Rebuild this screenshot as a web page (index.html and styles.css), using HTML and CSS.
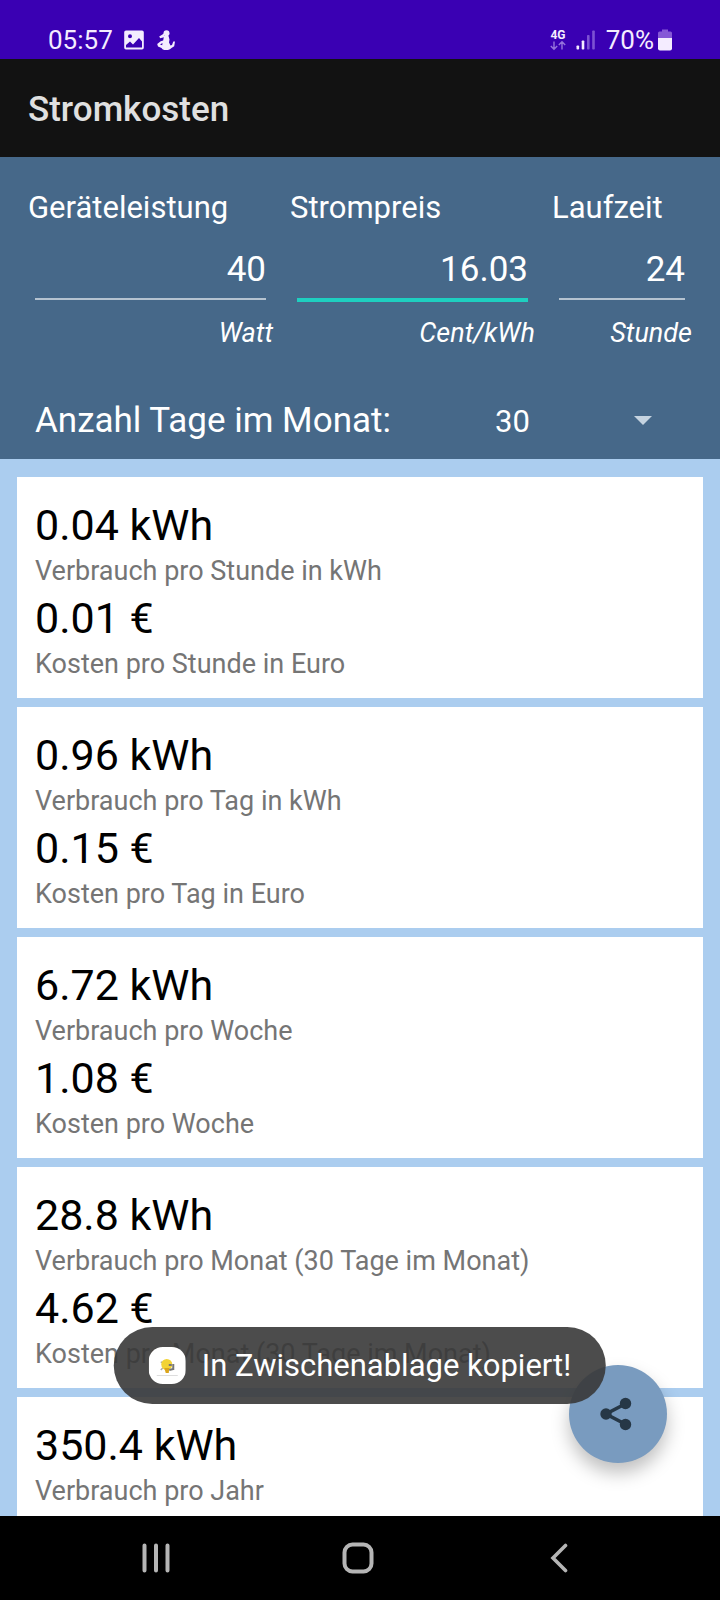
FILE: index.html
```html
<!DOCTYPE html>
<html lang="de">
<head>
<meta charset="utf-8">
<meta name="viewport" content="width=device-width, initial-scale=1">
<title>Stromkosten</title>
<link rel="stylesheet" href="styles.css">
</head>
<body>
<div class="app">
  <div class="status">
    <div class="status-left">
      <span class="clock">05:57</span>
      <svg class="icon-image" viewBox="0 0 20 20" width="20" height="20" aria-hidden="true"><path fill="#f4ecff" fill-rule="evenodd" d="M2 0.500h16a1.800 1.800 0 0 1 1.800 1.800v15.400a1.800 1.800 0 0 1-1.800 1.800h-16a1.800 1.800 0 0 1-1.800-1.800v-15.400a1.800 1.800 0 0 1 1.800-1.800zM6 4.200a2 2 0 1 0 0 4a2 2 0 1 0 0-4zM2 17.500h16v-6l-3-3.500l-6 6.500l-3-3l-4 3.500z"/></svg>
      <svg class="icon-app" viewBox="0 0 18 20" width="18" height="20" aria-hidden="true"><g fill="#f4ecff"><circle cx="9.500" cy="3.200" r="3"/><path d="M7 3.500L2.200 6.500l1 1.800L8 7z"/><path d="M7 6h4.500l1 3.500l-0.500 3l1.500 3l1.500-0.500l1.300-3.500h1.700l-0.800 4.700l-2.700 1.800q-2 2.200-5.500 2.200q-3.500 0-4.500-2.200l-3.500-1.500l-0.800-2.500l3.500-2.800l2.500-0.700z"/></g><path d="M3 14.500l2.500-1.500l-0.300 2.300z" fill="#3a00b3"/></svg>
    </div>
    <div class="status-right">
      <svg class="icon-net" viewBox="0 0 16 22" width="16" height="22" role="img" aria-label="4G"><text x="8" y="10" text-anchor="middle" class="net-text">4G</text><path d="M4 12.500v7.500M0.800 17l3.200 3.200L7.200 17M12 20.500v-7.500M8.800 16l3.200-3.200l3.200 3.200" fill="none" stroke="#9673dc" stroke-width="1.400"/></svg>
      <svg class="icon-signal" viewBox="0 0 20 20" width="20" height="20" aria-hidden="true"><g fill="#f4ecff"><rect x="0.500" y="15.500" width="2.600" height="4" rx="0.800"/><rect x="5.700" y="10.500" width="2.600" height="9" rx="0.800"/></g><g fill="#7d52d3"><rect x="11" y="5" width="2.600" height="14.500" rx="0.800"/><rect x="16.200" y="0.500" width="2.600" height="19" rx="0.800"/></g></svg>
      <span class="battery-level">70%</span>
      <svg class="icon-battery" viewBox="0 0 14 22" width="14" height="22" aria-hidden="true"><path d="M4 0.500h6v2h2.500a1.500 1.500 0 0 1 1.500 1.500v5.500h-14v-5.500a1.500 1.500 0 0 1 1.500-1.500h2.500z" fill="#8558d6"/><path d="M0 9h14v10.500a2 2 0 0 1-2 2h-10a2 2 0 0 1-2-2z" fill="#f4ecff"/></svg>
    </div>
  </div>

  <header class="title-bar"><h1 class="title">Stromkosten</h1></header>

  <form class="panel">
    <div class="fields">
      <div class="field">
        <label class="field-label" for="power">Geräteleistung</label>
        <input class="field-input" id="power" type="text" inputmode="decimal" value="40">
        <span class="field-unit">Watt</span>
      </div>
      <div class="field">
        <label class="field-label" for="price">Strompreis</label>
        <input class="field-input field-input-active" id="price" type="text" inputmode="decimal" value="16.03">
        <span class="field-unit">Cent/kWh</span>
      </div>
      <div class="field">
        <label class="field-label" for="runtime">Laufzeit</label>
        <input class="field-input" id="runtime" type="text" inputmode="decimal" value="24">
        <span class="field-unit">Stunde</span>
      </div>
    </div>
    <div class="days">
      <label class="days-label" for="days">Anzahl Tage im Monat:</label>
      <div class="days-box">
        <select class="days-select" id="days"><option>28</option><option>29</option><option selected>30</option><option>31</option></select>
        <svg class="days-arrow" viewBox="0 0 18 9" width="18" height="9" aria-hidden="true"><path d="M0 0h18l-9 9z" fill="#c5d3e0"/></svg>
      </div>
    </div>
  </form>

  <main class="content">
    <div class="results">
      <section class="card">
        <p class="value">0.04 kWh</p><p class="caption">Verbrauch pro Stunde in kWh</p>
        <p class="value">0.01 €</p><p class="caption">Kosten pro Stunde in Euro</p>
      </section>
      <section class="card">
        <p class="value">0.96 kWh</p><p class="caption">Verbrauch pro Tag in kWh</p>
        <p class="value">0.15 €</p><p class="caption">Kosten pro Tag in Euro</p>
      </section>
      <section class="card">
        <p class="value">6.72 kWh</p><p class="caption">Verbrauch pro Woche</p>
        <p class="value">1.08 €</p><p class="caption">Kosten pro Woche</p>
      </section>
      <section class="card">
        <p class="value">28.8 kWh</p><p class="caption">Verbrauch pro Monat (30 Tage im Monat)</p>
        <p class="value">4.62 €</p><p class="caption">Kosten pro Monat (30 Tage im Monat)</p>
      </section>
      <section class="card">
        <p class="value">350.4 kWh</p><p class="caption">Verbrauch pro Jahr</p>
      </section>
    </div>

    <button class="share" type="button" aria-label="Teilen">
      <svg viewBox="0 0 32 34" width="32" height="34" aria-hidden="true"><path d="M26 6.500L6 17l20 10.500" fill="none" stroke="#263746" stroke-width="3.600"/><g fill="#263746"><circle cx="25.500" cy="6.500" r="5.700"/><circle cx="6" cy="17" r="5.700"/><circle cx="25.500" cy="27.500" r="5.700"/></g></svg>
    </button>

    <div class="toast" role="status">
      <svg class="toast-icon" viewBox="0 0 37 37" width="37" height="37" aria-hidden="true"><rect width="37" height="37" rx="14" fill="#fff"/><path d="M8 28.500h21" stroke="#ddd" stroke-width="1"/><path d="M12 15l3 1M14 21l-2 2" stroke="#aaa" stroke-width="1.500"/><circle cx="18" cy="17.500" r="5.500" fill="#f2d335"/><path d="M15.500 21h5l-0.500 5h-3z" fill="#dba51b"/><path d="M20 18h3M24.500 17v6M20.500 23l4-1" stroke="#777" stroke-width="2"/></svg>
      <span class="toast-text">In Zwischenablage kopiert!</span>
    </div>
  </main>

  <nav class="nav">
    <button class="nav-button" type="button" aria-label="Letzte Apps"><svg viewBox="0 0 28 30" width="28" height="30"><path d="M2.500 2.500v25M14 2.500v25M25.500 2.500v25" stroke="#b5b5b5" stroke-width="4" stroke-linecap="round"/></svg></button>
    <button class="nav-button" type="button" aria-label="Startseite"><svg viewBox="0 0 32 32" width="32" height="32"><rect x="2.500" y="2.500" width="27" height="27" rx="8" fill="none" stroke="#b5b5b5" stroke-width="4"/></svg></button>
    <button class="nav-button" type="button" aria-label="Zurück"><svg viewBox="0 0 18 30" width="18" height="30"><path d="M15.500 2.500L3 15l12.500 12.500" fill="none" stroke="#b5b5b5" stroke-width="3.600" stroke-linecap="round"/></svg></button>
  </nav>
</div>
</body>
</html>
```
FILE: styles.css
```css
* {
  box-sizing: border-box;
}

body {
  margin: 0;
  font-family: Roboto, "Noto Sans", sans-serif;
  color: #fff;
}

.app {
  display: flex;
  flex-direction: column;
  height: 100vh;
  background: #abcdef;
}

.status {
  display: flex;
  justify-content: space-between;
  align-items: flex-end;
  height: 59px;
  padding: 0 48px 5px;
  background: #3a00b3;
  color: #f4ecff;
  font-size: 26px;
  line-height: 28px;
}

.status-left,
.status-right {
  display: flex;
  align-items: center;
}

.icon-image {
  margin-left: 11px;
}

.icon-app {
  margin-left: 13px;
}

.net-text {
  font-size: 12px;
  font-weight: 700;
  fill: #f4ecff;
}

.icon-signal {
  margin: 0 10px;
}

.icon-battery {
  margin-left: 4px;
}

.title-bar {
  display: flex;
  align-items: center;
  height: 98px;
  padding: 4px 28px 0;
  background: #121212;
}

.title {
  margin: 0;
  font-size: 35px;
  font-weight: 500;
  line-height: 42px;
  color: #e0e0e0;
}

.panel {
  padding: 29px 28px 8px;
  background: #466889;
}

.fields {
  display: grid;
  grid-template-columns: 7fr 7fr 4fr;
  gap: 17px;
}

.field {
  display: flex;
  flex-direction: column;
  min-width: 0;
}

.field-label {
  font-size: 31px;
  line-height: 44px;
}

.field-input {
  min-width: 0;
  height: 73px;
  margin: 0 7px;
  padding: 5px 0 0;
  border: 0;
  border-radius: 0;
  outline: 0;
  background: linear-gradient(#b5c3d0, #b5c3d0) 0 68px / 100% 2px no-repeat;
  color: #fff;
  font-family: inherit;
  font-size: 35px;
  text-align: right;
}

.field-input-active {
  background: linear-gradient(#1ecfc0, #1ecfc0) 0 68px / 100% 4px no-repeat;
}

.field-unit {
  font-size: 27px;
  font-style: italic;
  line-height: 60px;
  text-align: right;
}

.days {
  display: grid;
  grid-template-columns: 2fr 1fr;
  align-items: center;
  margin-top: 28px;
  padding-left: 7px;
}

.days-label {
  font-size: 35px;
  line-height: 60px;
}

.days-box {
  position: relative;
}

.days-select {
  appearance: none;
  width: 100%;
  height: 60px;
  padding: 0 60px 0 22px;
  border: 0;
  outline: 0;
  background: transparent;
  color: #fff;
  font-family: inherit;
  font-size: 31px;
}

.days-arrow {
  position: absolute;
  top: 25px;
  right: 40px;
  pointer-events: none;
}

.content {
  position: relative;
  flex: 1;
  min-height: 0;
}

.results {
  display: flex;
  flex-direction: column;
  gap: 9px;
  height: 100%;
  padding: 18px 17px 0;
  overflow-y: auto;
  scrollbar-width: none;
}

.card {
  flex: none;
  padding: 22px 18px 13px;
  background: #fff;
}

.value,
.caption {
  margin: 0;
}

.value {
  font-size: 43px;
  line-height: 52px;
  color: #000;
}

.caption {
  font-size: 27px;
  line-height: 41px;
  color: #757575;
}

.share {
  position: absolute;
  right: 53px;
  bottom: 53px;
  display: flex;
  align-items: center;
  justify-content: center;
  width: 98px;
  height: 98px;
  padding: 0 4px 0 0;
  border: 0;
  border-radius: 50%;
  background: #799bbf;
  box-shadow: 0 10px 18px rgba(0, 0, 0, 0.25);
}

.toast {
  position: absolute;
  bottom: 112px;
  left: 50%;
  display: flex;
  align-items: center;
  gap: 16px;
  height: 77px;
  padding: 0 35px;
  border-radius: 39px;
  background: rgba(56, 56, 56, 0.9);
  transform: translateX(-50%);
  white-space: nowrap;
}

.toast-text {
  font-size: 31px;
  line-height: 40px;
}

.nav {
  display: flex;
  height: 84px;
  padding: 0 60px 0 55px;
  background: #000;
}

.nav-button {
  display: flex;
  flex: 1;
  align-items: center;
  justify-content: center;
  padding: 0;
  border: 0;
  background: transparent;
}
```
